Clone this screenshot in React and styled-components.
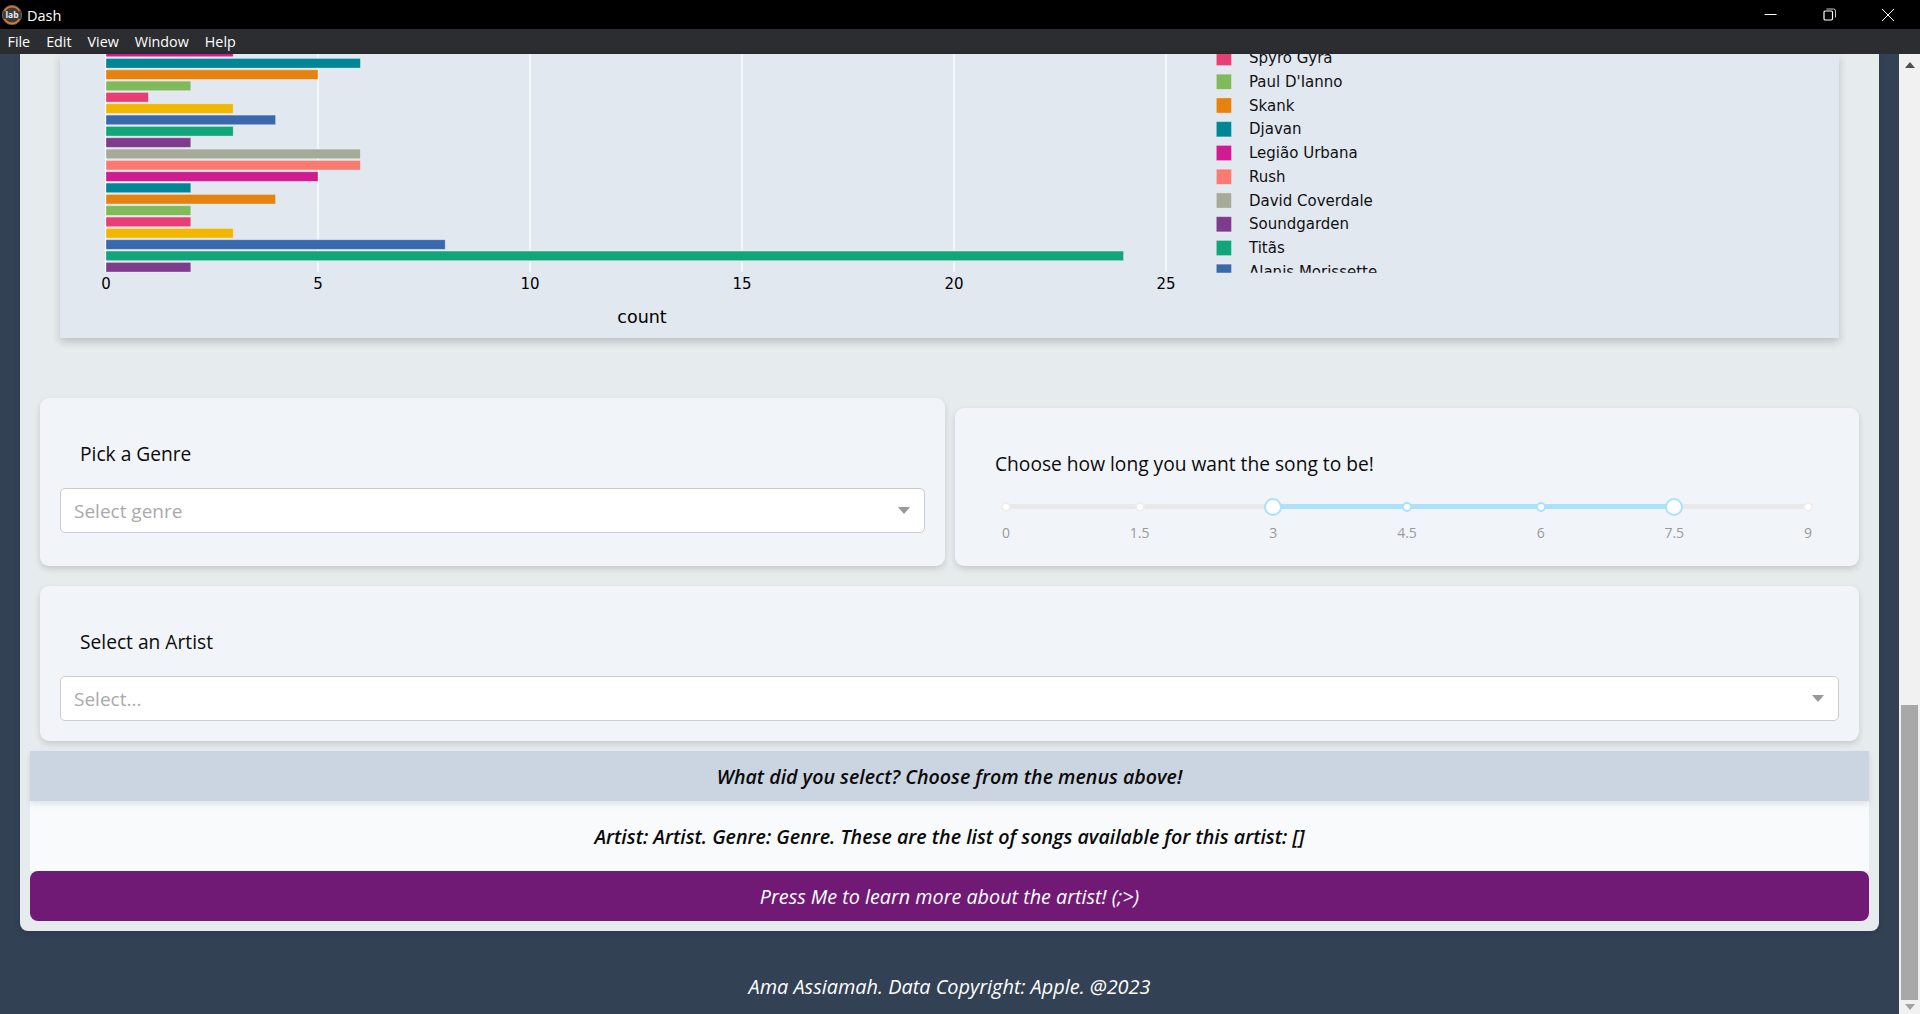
import React from "react";
import styled, { createGlobalStyle } from "styled-components";

const Global = createGlobalStyle`
  html, body { margin: 0; padding: 0; background: #334155; overflow: hidden; }
  * { box-sizing: border-box; }
`;

const UI = `"Open Sans", "Noto Sans", sans-serif`;
const PLOT = `"DejaVu Sans", Verdana, sans-serif`;

const Shell = styled.div`
  width: 1920px; height: 1014px; display: flex; flex-direction: column; overflow: hidden;
  font-family: ${UI};
`;
const TitleBar = styled.div`
  height: 29px; flex: none; background: #000; color: #fff; display: flex; align-items: center;
  justify-content: space-between; padding: 0 3px 0 2px;
`;
const Brand = styled.div`
  display: flex; align-items: center; gap: 5px; font-size: 14.5px; padding-top: 1px;
`;
const WindowControls = styled.div`display: flex;`;
const WindowButton = styled.div`
  width: 58.5px; height: 29px; display: flex; align-items: center; justify-content: center;
`;
const MenuBar = styled.div`
  height: 25px; flex: none; background: #2b2d31; color: #fff; display: flex; align-items: center;
  gap: 16px; padding: 0 7.5px; font-size: 14.3px;
`;
const MenuItem = styled.span`display: block;`;
const Workspace = styled.div`flex: 1; display: flex; min-height: 0;`;
const PageArea = styled.div`
  flex: 1; min-width: 0; background: #334155; padding: 0 20px; display: flex; flex-direction: column;
`;
const Container = styled.div`
  background: #e6ebee; padding: 0 10px 10px; border-radius: 0 0 8px 8px; height: 877px;
  display: flex; flex-direction: column;
  box-shadow: 0 2px 6px rgba(0,0,0,.12);
`;
const ChartCard = styled.div`
  height: 284px; flex: none; margin: 0 30px; background: #e2e8f0;
  box-shadow: 0 4px 8px rgba(0,0,0,.18); overflow: hidden;
`;
const ChartSvg = styled.svg`display: block;`;
const FilterRow = styled.div`
  display: flex; align-items: flex-end; gap: 10px; margin: 60px 10px 0 10px;
`;
const Card = styled.div`
  background: #f1f5f9; border-radius: 9px; box-shadow: 0 3px 6px rgba(0,0,0,.14);
  padding: 40px 20px 0;
`;
const GenreCard = styled(Card)`width: 905px; height: 168px;`;
const LengthCard = styled(Card)`width: 904px; height: 158px; padding: 40px 40px 0;`;
const ArtistCard = styled(Card)`height: 155px; margin: 20px 10px 0 10px;`;
const FieldLabel = styled.div`
  font-size: 19.2px; line-height: 32px; color: #0b0b0b; padding-left: ${p => p.$indent || 0}px;
  margin-bottom: 18px;
`;
const Select = styled.div`
  height: 45px; background: #fff; border: 1.5px solid #ccc; border-radius: 5px; display: flex;
  align-items: center; justify-content: space-between; padding: 0 14px 0 13px;
  color: #aaa; font-size: 19px;
`;
const Caret = styled.span`
  width: 0; height: 0; border-left: 6px solid transparent; border-right: 6px solid transparent;
  border-top: 7px solid #999;
`;
const Slider = styled.div`
  position: relative; height: 62px; margin: 24px 11px 0;
`;
const Track = styled.div`
  position: relative; height: 5px; background: #e9e9e9; border-radius: 3px;
`;
const TrackFill = styled.div`
  position: absolute; top: 0; bottom: 0; left: ${p => p.$from}%; right: ${p => 100 - p.$to}%;
  background: #abe2fb;
`;
const Dot = styled.span`
  position: absolute; top: 50%; left: ${p => p.$at}%; width: 10px; height: 10px; border-radius: 50%;
  transform: translate(-50%, -50%); background: #fff;
  border: 2px solid ${p => (p.$on ? "#abe2fb" : "#eeeeee")};
`;
const Handle = styled(Dot)`
  width: 18px; height: 18px; border-color: #abe2fb;
`;
const Marks = styled.div`
  display: flex; justify-content: space-between; margin-top: 14px;
`;
const Mark = styled.span`
  width: 0; display: flex; justify-content: center; font-size: 14px; line-height: 20px; color: #999;
  white-space: nowrap;
`;
const SummaryHead = styled.div`
  margin-top: 10px; height: 50px; flex: none; background: #cbd5e1; display: flex; align-items: center;
  justify-content: center; font-size: 19.6px; font-weight: 600; font-style: italic; color: #0a0a0a;
  box-shadow: 0 3px 6px rgba(0,0,0,.1); position: relative;
`;
const SummaryBody = styled.div`
  height: 70px; flex: none; background: #f8fafc; display: flex; align-items: center; justify-content: center;
  font-size: 19.65px; font-weight: 600; font-style: italic; color: #0a0a0a;
`;
const PressButton = styled.div`
  height: 50px; flex: none; background: #701a75; border-radius: 8px; color: #fff; display: flex;
  align-items: center; justify-content: center; font-size: 19.75px; font-style: italic;
`;
const Footer = styled.div`
  flex: 1; display: flex; align-items: center; justify-content: center; color: #fff;
  font-style: italic; font-size: 19.9px; padding-top: 28px;
`;
const Scrollbar = styled.div`
  width: 21px; flex: none; background: #f1f1f1; display: flex; flex-direction: column; align-items: center;
`;
const ScrollUp = styled.div`
  height: 21px; flex: none; display: flex; align-items: center; justify-content: center;
`;
const Thumb = styled.div`
  width: 17px; height: 295px; margin-top: 630px; background: #a8a8a8; flex: none;
`;
const ScrollDown = styled.div`flex: 1; display: flex; align-items: center; justify-content: center;`;
const Arrow = styled.span`
  width: 0; height: 0; border-left: 5px solid transparent; border-right: 5px solid transparent;
  ${p => p.$down ? "border-top: 6px solid #a3a3a3;" : "border-bottom: 6px solid #505050;"}
`;

const PALETTE = ["#7F3C8D","#11A579","#3969AC","#F2B701","#E73F74","#80BA5A","#E68310","#008695","#CF1C90","#f97b72","#A5AA99"];
const VALUES = [2,24,8,3,2,2,4,2,5,6,6,2,3,4,3,1,2,5,6,3];
const LEGEND = [
  ["Spyro Gyra", 4], ["Paul D'Ianno", 5], ["Skank", 6], ["Djavan", 7], ["Legião Urbana", 8],
  ["Rush", 9], ["David Coverdale", 10], ["Soundgarden", 0], ["Titãs", 1], ["Alanis Morissette", 2],
];
const X0 = 106, UNIT = 42.4;

function Chart() {
  return (
    <ChartSvg width="1779" height="284" viewBox="60 54 1779 284" fontFamily={PLOT}>
      <defs>
        <clipPath id="legendClip"><rect x="1205" y="40" width="400" height="232.7" /></clipPath>
      </defs>
      {[5, 10, 15, 20, 25].map(t => (
        <line key={t} x1={X0 + t * UNIT} x2={X0 + t * UNIT} y1="40" y2="272" stroke="#fff" strokeWidth="1.2" />
      ))}
      <line x1={X0} x2={X0} y1="40" y2="272" stroke="#fff" strokeWidth="2" />
      {VALUES.map((v, i) => (
        <rect key={i} x={X0} y={262.4 - i * 11.33} width={v * UNIT} height={9.6}
          fill={PALETTE[i % 11]} stroke="#fff" strokeOpacity=".4" strokeWidth=".8" />
      ))}
      {[0, 5, 10, 15, 20, 25].map(t => (
        <text key={t} x={X0 + t * UNIT} y="288.5" fontSize="15" textAnchor="middle" fill="#000">{t}</text>
      ))}
      <text x="642" y="322.5" fontSize="17.5" textAnchor="middle" fill="#000">count</text>
      <g clipPath="url(#legendClip)">
        {LEGEND.map(([name, c], i) => {
          const cy = 58 + i * 23.75;
          return (
            <g key={name}>
              <rect x="1216.3" y={cy - 7.6} width="15.2" height="15.2" fill={PALETTE[c]} stroke="#fff" strokeOpacity=".4" strokeWidth=".8" />
              <text x="1249" y={cy + 5.2} fontSize="15" fill="#111">{name}</text>
            </g>
          );
        })}
      </g>
    </ChartSvg>
  );
}

const Logo = () => (
  <svg width="20" height="20" viewBox="0 0 20 20">
    <circle cx="10" cy="10" r="9.6" fill="#3b3b3b" stroke="#8a8a8a" strokeWidth=".7" />
    <path d="M2.6 6.2A8.3 8.3 0 0 1 17.4 6.2" fill="none" stroke="#e8791f" strokeWidth="1.5" />
    <path d="M2.6 13.8A8.3 8.3 0 0 0 17.4 13.8" fill="none" stroke="#e8791f" strokeWidth="1.5" />
    <text x="10" y="12.8" fontSize="8.5" fontWeight="700" textAnchor="middle" fill="#eee" fontFamily={UI}>lab</text>
  </svg>
);

const MARKS = ["0", "1.5", "3", "4.5", "6", "7.5", "9"];

export default function App() {
  return (
    <Shell>
      <Global />
      <TitleBar>
        <Brand><Logo /><span>Dash</span></Brand>
        <WindowControls>
          <WindowButton>
            <svg width="13" height="13" viewBox="0 0 13 13"><path d="M0.5 6.5H12.5" stroke="#fff" strokeWidth="1" /></svg>
          </WindowButton>
          <WindowButton>
            <svg width="13" height="13" viewBox="0 0 13 13" fill="none" stroke="#fff">
              <rect x="1" y="3" width="8.5" height="9" rx="1.2" strokeWidth="1.2" />
              <path d="M3.5 1H10.5A2 2 0 0 1 12.5 3V9.5" strokeWidth=".8" />
            </svg>
          </WindowButton>
          <WindowButton>
            <svg width="14" height="14" viewBox="0 0 14 14"><path d="M1 1L13 13M13 1L1 13" stroke="#fff" strokeWidth="1" /></svg>
          </WindowButton>
        </WindowControls>
      </TitleBar>
      <MenuBar>
        {["File", "Edit", "View", "Window", "Help"].map(m => <MenuItem key={m}>{m}</MenuItem>)}
      </MenuBar>
      <Workspace>
        <PageArea>
          <Container>
            <ChartCard><Chart /></ChartCard>
            <FilterRow>
              <GenreCard>
                <FieldLabel $indent={20}>Pick a Genre</FieldLabel>
                <Select>Select genre<Caret /></Select>
              </GenreCard>
              <LengthCard>
                <FieldLabel>Choose how long you want the song to be!</FieldLabel>
                <Slider>
                  <Track>
                    <TrackFill $from={33.333} $to={83.333} />
                    {MARKS.map((m, i) => {
                      const at = (i / 6) * 100;
                      return <Dot key={m} $at={at} $on={i >= 2 && i <= 5} />;
                    })}
                    <Handle $at={33.333} />
                    <Handle $at={83.333} />
                  </Track>
                  <Marks>{MARKS.map(m => <Mark key={m}>{m}</Mark>)}</Marks>
                </Slider>
              </LengthCard>
            </FilterRow>
            <ArtistCard>
              <FieldLabel $indent={20}>Select an Artist</FieldLabel>
              <Select>Select...<Caret /></Select>
            </ArtistCard>
            <SummaryHead>What did you select? Choose from the menus above!</SummaryHead>
            <SummaryBody>Artist: Artist. Genre: Genre. These are the list of songs available for this artist: []</SummaryBody>
            <PressButton>Press Me to learn more about the artist! (;&gt;)</PressButton>
          </Container>
          <Footer>Ama Assiamah. Data Copyright: Apple. @2023</Footer>
        </PageArea>
        <Scrollbar>
          <ScrollUp><Arrow /></ScrollUp>
          <Thumb />
          <ScrollDown><Arrow $down /></ScrollDown>
        </Scrollbar>
      </Workspace>
    </Shell>
  );
}
